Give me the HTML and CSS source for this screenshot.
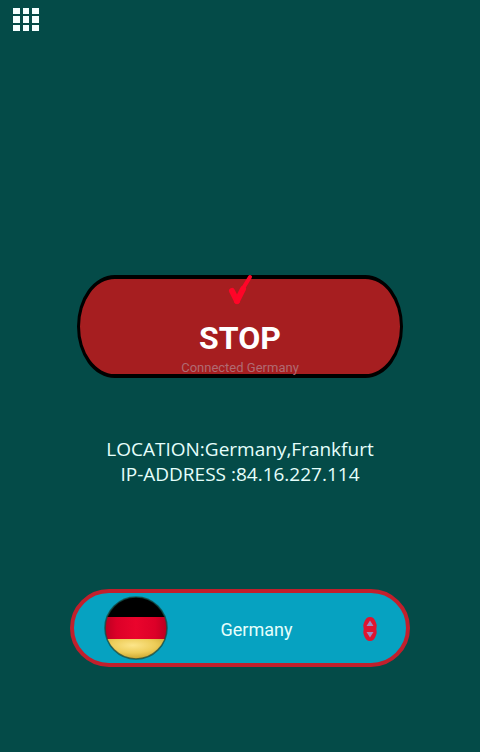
FILE: index.html
```html
<!DOCTYPE html>
<html lang="en">
<head>
<meta charset="utf-8">
<meta name="viewport" content="width=device-width, initial-scale=1">
<title>VPN</title>
<link rel="stylesheet" href="styles.css">
</head>
<body>
<header class="topbar">
  <button class="menu" type="button" aria-label="Menu">
    <svg width="26" height="24" viewBox="0 0 26 24" fill="#f4ffff" aria-hidden="true">
      <path d="M0 0h7v6H0zM10 0h6v6h-6zM19 0h7v6h-7zM0 8h7v7H0zM10 8h6v7h-6zM19 8h7v7h-7zM0 17h7v6H0zM10 17h6v6h-6zM19 17h7v6h-7z"/>
    </svg>
  </button>
</header>
<main class="main">
  <button class="connect" type="button">
    <svg class="check" width="26" height="32" viewBox="0 0 26 32" fill="none" stroke="#ff0528" stroke-linecap="round" stroke-linejoin="round" aria-hidden="true">
      <path d="M5 17L10 27" stroke-width="6"/>
      <path d="M10 27L16 15" stroke-width="6"/>
      <path d="M15 16L23 3" stroke-width="4"/>
    </svg>
    <span class="action">STOP</span>
    <span class="status">Connected Germany</span>
  </button>
  <p class="info">LOCATION:Germany,Frankfurt<br>IP-ADDRESS :84.16.227.114</p>
  <label class="picker">
    <svg class="flag" width="64" height="64" viewBox="0 0 64 64" aria-hidden="true">
      <defs>
        <clipPath id="disc"><circle cx="32" cy="32" r="31"/></clipPath>
        <linearGradient id="red"><stop offset="0" stop-color="#b80020"/><stop offset=".2" stop-color="#dc0028"/><stop offset=".5" stop-color="#ea042c"/><stop offset=".8" stop-color="#dc0028"/><stop offset="1" stop-color="#b80020"/></linearGradient>
        <radialGradient id="gold" cx=".45" cy=".3" r=".65"><stop offset="0" stop-color="#fce58a"/><stop offset=".55" stop-color="#edcc58"/><stop offset="1" stop-color="#c9a42e"/></radialGradient>
      </defs>
      <g clip-path="url(#disc)">
        <path fill="#000" d="M0 0h64v21H0z"/>
        <path fill="url(#red)" d="M0 21h64v22H0z"/>
        <path fill="url(#gold)" d="M0 43h64v21H0z"/>
      </g>
      <circle cx="32" cy="32" r="31" fill="none" stroke="#164a42" stroke-opacity=".75" stroke-width="1.6"/>
    </svg>
    <select class="country" aria-label="Country">
      <option>Germany</option>
    </select>
    <svg class="arrows" width="14" height="24" viewBox="0 0 14 24" aria-hidden="true">
      <path fill="#df1430" d="M7 0C10 0 11.500 2 12.500 4.500C13.500 7 14 8 13.500 10.500Q13 12 13.500 13.500C14 16 13.500 17 12.500 19.500C11.500 22 10 24 7 24S2.500 22 1.500 19.500C.5 17 0 16 .5 13.500Q1 12 .5 10.500C0 8 .5 7 1.500 4.500C2.500 2 4 0 7 0z"/>
      <path fill="#9c8bc4" d="M7 3.500L10.500 9h-7zM7 20.500L3.500 15h7z"/>
    </svg>
  </label>
</main>
</body>
</html>
```
FILE: styles.css
```css
* {
  box-sizing: border-box;
}

body {
  margin: 0;
  min-height: 100vh;
  background: #044b48;
  color: #e6fffc;
  font-family: Roboto, "Liberation Sans", sans-serif;
}

button {
  font: inherit;
  color: inherit;
  cursor: pointer;
}

.topbar {
  padding: 8px 13px;
}

.menu {
  display: block;
  padding: 0;
  border: 0;
  background: none;
}

.menu svg {
  display: block;
}

.main {
  display: flex;
  flex-direction: column;
  align-items: center;
  padding-top: 235px;
}

.connect {
  display: flex;
  flex-direction: column;
  align-items: center;
  width: 68%;
  padding: 0;
  border: 4px solid #000;
  border-width: 4px 3px;
  border-radius: 38px / 52px;
  background: #a61e20;
}

.check {
  margin-top: -5px;
}

.action {
  margin-top: 12px;
  color: #fff;
  font-size: 32px;
  font-weight: 700;
  line-height: 40px;
}

.status {
  padding-top: 4px;
  color: #b06a72;
  font-size: 13px;
  line-height: 12px;
}

.info {
  margin: 59px 0 102px;
  font-family: "Open Sans", "Noto Sans", sans-serif;
  font-size: 19px;
  line-height: 25px;
  text-align: center;
}

.picker {
  display: grid;
  grid-template-columns: 64px 1fr 14px;
  align-items: center;
  width: 71%;
  padding: 3px 29px 3px 30px;
  border: 4px solid #c21f2c;
  border-radius: 40px;
  background: #06a2c1;
}

.flag,
.arrows {
  display: block;
}

.arrows {
  margin-top: 2px;
}

.country {
  width: 100%;
  padding: 4px 18px 0 0;
  border: 0;
  appearance: none;
  background: none;
  color: inherit;
  font: 18px/24px Roboto, "Liberation Sans", sans-serif;
  text-align: center;
  text-align-last: center;
}
```
